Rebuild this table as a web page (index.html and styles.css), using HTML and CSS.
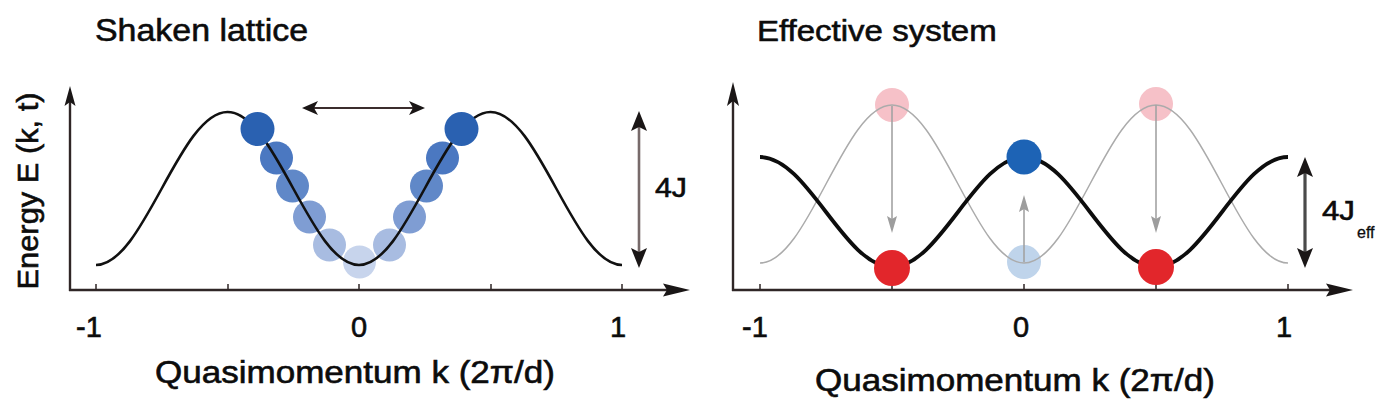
FILE: index.html
```html
<!DOCTYPE html>
<html lang="en">
<head>
<meta charset="utf-8">
<title>Shaken lattice vs effective system</title>
<link rel="stylesheet" href="styles.css">
</head>
<body>
<div class="figure">
  <section class="panel panel-left">
    <h2 class="title"><span class="stretch">Shaken lattice</span></h2>
    <svg class="plot" width="700" height="295" viewBox="0 50 700 295" xmlns="http://www.w3.org/2000/svg">
      <text class="ylabel" transform="translate(38,191) rotate(-90)" text-anchor="middle" textLength="197" lengthAdjust="spacingAndGlyphs">Energy E (k, t)</text>
      <line class="axis" x1="70" y1="291" x2="70" y2="100"/>
      <polygon class="head" points="70,86 64.5,106 70,102 75.5,106"/>
      <line class="axis" x1="69" y1="290" x2="672" y2="290"/>
      <polygon class="head" points="690,290 663,283.5 667,290 663,296.5"/>
      <path class="tick" d="M96,284V290 M228,284V290 M359,284V290 M491,284V290 M622,284V290"/>

      <circle class="b6" cx="359.5" cy="262" r="16.5"/>
      <circle class="b5" cx="329.5" cy="245" r="16.5"/>
      <circle class="b5" cx="389.5" cy="245" r="16.5"/>
      <circle class="b4" cx="309.5" cy="217" r="16.5"/>
      <circle class="b4" cx="409.5" cy="217" r="16.5"/>
      <circle class="b3" cx="292.5" cy="186" r="16.5"/>
      <circle class="b3" cx="426.5" cy="186" r="16.5"/>
      <circle class="b2" cx="276.5" cy="158" r="16.5"/>
      <circle class="b2" cx="442.5" cy="158" r="16.5"/>

      <path class="curve" d="M96,265 C143.8,265 179.7,112 227.5,112 C275.3,112 311.2,265 359,265 C406.8,265 442.7,112 490.5,112 C538.3,112 574.2,265 622,265"/>

      <circle class="b1" cx="257.5" cy="129" r="17"/>
      <circle class="b1" cx="461.5" cy="129" r="17"/>

      <line class="shake" x1="312" y1="108" x2="415" y2="108"/>
      <polygon class="head" points="302,108 318,101 314,108 318,115"/>
      <polygon class="head" points="425,108 409,101 413,108 409,115"/>

      <line class="gap" x1="639" y1="125" x2="639" y2="254"/>
      <polygon class="head" points="639,111 631,131 639,127 647,131"/>
      <polygon class="head" points="639,268 631,248 639,252 647,248"/>
      <text class="lbl" x="655" y="197" textLength="32" lengthAdjust="spacingAndGlyphs">4J</text>

      <text class="lbl tickl" x="89" y="337" text-anchor="middle">-1</text>
      <text class="lbl tickl" x="359" y="337" text-anchor="middle">0</text>
      <text class="lbl tickl" x="618" y="337" text-anchor="middle">1</text>
    </svg>
    <p class="xlabel"><span class="stretch">Quasimomentum k (2π/d)</span></p>
  </section>

  <section class="panel panel-right">
    <h2 class="title"><span class="stretch">Effective system</span></h2>
    <svg class="plot" width="682" height="295" viewBox="700 50 682 295" xmlns="http://www.w3.org/2000/svg">
      <line class="axis" x1="733" y1="291" x2="733" y2="100"/>
      <polygon class="head" points="733,82 727,106 733,101 739,106"/>
      <line class="axis" x1="732" y1="290" x2="1335" y2="290"/>
      <polygon class="head" points="1353,290 1326,283.5 1330,290 1326,296.5"/>
      <path class="tick" d="M760,284V290 M892,284V290 M1024,284V290 M1156,284V290 M1288,284V290"/>

      <circle class="pink" cx="892" cy="105" r="17"/>
      <circle class="pink" cx="1156" cy="104" r="17"/>
      <circle class="lightblue" cx="1024" cy="262" r="17"/>

      <path class="curve-thin" d="M760,263 C808,263 844,105 892,105 C940,105 976,263 1024,263 C1072,263 1108,105 1156,105 C1204,105 1240,263 1288,263"/>
      <path class="curve-bold" d="M760,157 C808,157 844,267 892,267 C940,267 976,157 1024,157 C1072,157 1108,267 1156,267 C1204,267 1240,157 1288,157"/>

      <line class="drop" x1="892" y1="106" x2="892" y2="220"/>
      <polygon class="head-gray" points="892,233 887,216 892,219 897,216"/>
      <line class="drop" x1="1156" y1="105" x2="1156" y2="220"/>
      <polygon class="head-gray" points="1156,233 1151,216 1156,219 1161,216"/>
      <line class="drop" x1="1024" y1="262" x2="1024" y2="208"/>
      <polygon class="head-gray" points="1024,195 1019,212 1024,209 1029,212"/>

      <circle class="red" cx="892" cy="268" r="18"/>
      <circle class="red" cx="1156" cy="267" r="18"/>
      <circle class="blue" cx="1024" cy="157" r="17.5"/>

      <line class="gap-dark" x1="1305" y1="170" x2="1305" y2="255"/>
      <polygon class="head" points="1305,157 1297,177 1305,173 1313,177"/>
      <polygon class="head" points="1305,268 1297,248 1305,252 1313,248"/>
      <text class="lbl" x="1322" y="220" textLength="33" lengthAdjust="spacingAndGlyphs">4J</text>
      <text class="sub" x="1357" y="238">eff</text>

      <text class="lbl tickl" x="755" y="337" text-anchor="middle">-1</text>
      <text class="lbl tickl" x="1021" y="337" text-anchor="middle">0</text>
      <text class="lbl tickl" x="1284" y="337" text-anchor="middle">1</text>
    </svg>
    <p class="xlabel"><span class="stretch">Quasimomentum k (2π/d)</span></p>
  </section>
</div>
</body>
</html>
```

FILE: styles.css
```css
* { box-sizing: border-box; }

html, body {
  margin: 0;
  padding: 0;
  background: #ffffff;
}

body {
  font-family: "Liberation Sans", Arial, Helvetica, sans-serif;
  color: #0c0c0c;
}

.figure {
  display: flex;
  width: 1382px;
  height: 402px;
  overflow: hidden;
}

.panel {
  display: flex;
  flex-direction: column;
  flex: none;
}

.panel-left { width: 700px; }
.panel-right { width: 682px; }

.title {
  margin: 0;
  height: 50px;
  font-weight: 400;
  line-height: 1;
  white-space: nowrap;
  -webkit-text-stroke: 0.6px #0c0c0c;
}

.panel-left .title {
  font-size: 32px;
  padding: 14px 0 0 95px;
}

.panel-right .title {
  font-size: 30px;
  padding: 16px 0 0 57px;
}

.stretch {
  display: inline-block;
  transform-origin: 0 50%;
}

.panel-left .title .stretch { transform: scaleX(1.06); }
.panel-right .title .stretch { transform: scaleX(1.10); }

.plot {
  display: block;
  flex: none;
}

.xlabel {
  margin: 0;
  height: 57px;
  font-size: 31px;
  line-height: 1;
  white-space: nowrap;
  -webkit-text-stroke: 0.6px #0c0c0c;
}

.panel-left .xlabel { padding: 12px 0 0 155px; }
.panel-right .xlabel { padding: 20px 0 0 115px; }

.xlabel .stretch { transform: scaleX(1.13); }

/* plot elements */
.axis { stroke: #2f2626; stroke-width: 2.4; fill: none; }
.tick { stroke: #2f2626; stroke-width: 1.5; fill: none; }
.head { fill: #1a1616; stroke: none; }
.head-gray { fill: #9d9d9d; stroke: none; }

.curve { stroke: #111111; stroke-width: 2.6; fill: none; }
.curve-thin { stroke: #ababab; stroke-width: 1.5; fill: none; }
.curve-bold { stroke: #0d0d0d; stroke-width: 3.8; fill: none; }

.shake { stroke: #3b2d2d; stroke-width: 1.8; }
.gap { stroke: #776a6a; stroke-width: 2.6; }
.gap-dark { stroke: #4a4a4a; stroke-width: 3.2; }
.drop { stroke: #a3a3a3; stroke-width: 1.6; }

.b1 { fill: #2a61b1; }
.b2 { fill: #4b78c1; }
.b3 { fill: #6088c8; }
.b4 { fill: #7f9dd3; }
.b5 { fill: #a8bce1; }
.b6 { fill: #c7d4ec; }

.pink { fill: #f6c1c8; }
.lightblue { fill: #bfd4eb; }
.red { fill: #e2262b; }
.blue { fill: #1d63b5; }

.lbl {
  font-family: "Liberation Sans", Arial, Helvetica, sans-serif;
  font-size: 28px;
  fill: #0c0c0c;
  stroke: #0c0c0c;
  stroke-width: 0.6px;
}

.tickl {
  font-size: 29px;
}

.ylabel {
  font-family: "Liberation Sans", Arial, Helvetica, sans-serif;
  font-size: 29px;
  fill: #0c0c0c;
  stroke: #0c0c0c;
  stroke-width: 0.6px;
}

.sub {
  font-family: "Liberation Sans", Arial, Helvetica, sans-serif;
  font-size: 16px;
  fill: #0c0c0c;
  stroke: #0c0c0c;
  stroke-width: 0.3px;
}
```
